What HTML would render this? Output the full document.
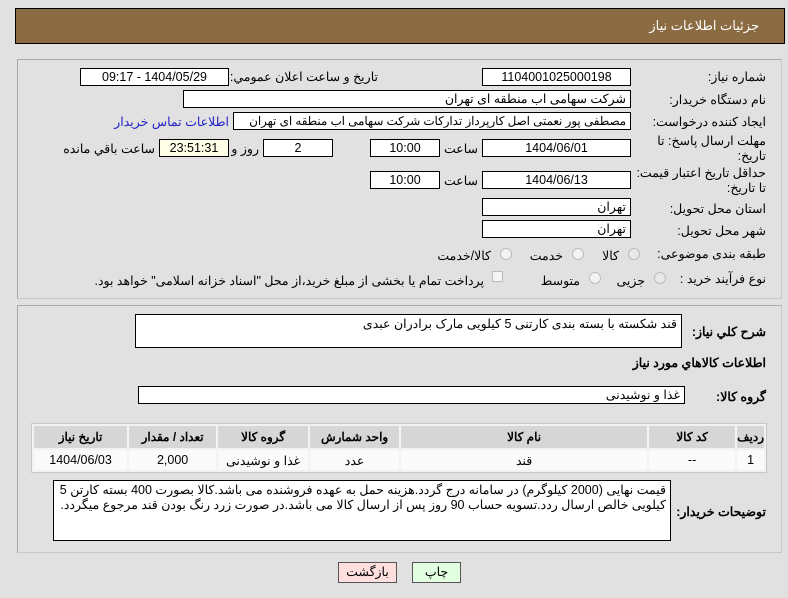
<!DOCTYPE html>
<html><head><meta charset="utf-8"><style>
*{margin:0;padding:0;box-sizing:border-box}
body{width:788px;height:598px;background:#e1e1e1;position:relative;overflow:hidden;font-family:Tahoma,"Liberation Sans","Noto Sans CJK SC",sans-serif;font-size:12.5px;color:#000}
.a{position:absolute;white-space:nowrap}
.l{position:absolute;white-space:nowrap;direction:rtl;text-align:right}
.in{position:absolute;background:#fff;border:1px solid #000;text-align:center;line-height:16px;direction:rtl;white-space:nowrap;overflow:hidden}
.inr{text-align:right;padding-right:4px}
.rad{position:absolute;width:12px;height:12px;border-radius:50%;border:1px solid #bbb;background:#f4f4f4}
.panel{position:absolute;border:1px solid #a8a8a8;border-right-color:#c8c8c8;border-bottom-color:#c8c8c8}
table{position:absolute;border-collapse:separate;border-spacing:2px;background:#f2f2f2;border:1px solid #c8c8c8;direction:rtl}
th{background:#d6d6d6;font-weight:bold;height:22px;font-size:12px}
td{background:#fafafa;text-align:center;height:20px}
.btn{position:absolute;border:1px solid #555;text-align:center;line-height:19px;height:21px}
</style></head><body>
<div class="a" style="left:15px;top:8px;width:770px;height:36px;background:#8b6b42;border:1px solid #000"></div>
<div class="l" style="right:29px;top:18px;color:#fff;font-size:13px">جزئیات اطلاعات نیاز</div>

<div class="panel" style="left:17px;top:59px;width:765px;height:240px"></div>
<div class="l" style="right:22px;top:69px">شماره نیاز:</div>
<div class="in" style="left:482px;top:68px;width:149px;height:18px">1104001025000198</div>
<div class="l" style="right:410px;top:69px">تاریخ و ساعت اعلان عمومي:</div>
<div class="in" style="left:80px;top:68px;width:149px;height:18px">1404/05/29 - 09:17</div>

<div class="l" style="right:22px;top:92px">نام دستگاه خریدار:</div>
<div class="in inr" style="left:183px;top:90px;width:448px;height:18px">شرکت سهامی اب منطقه ای تهران</div>

<div class="l" style="right:22px;top:114px">ایجاد کننده درخواست:</div>
<div class="in inr" style="left:233px;top:112px;width:398px;height:18px;font-size:11.8px">مصطفی پور نعمتی اصل کارپرداز تدارکات شرکت سهامی اب منطقه ای تهران</div>
<div class="l" style="right:559px;top:114px;color:#2222cc">اطلاعات تماس خریدار</div>

<div class="l" style="right:22px;top:134px;line-height:15px">مهلت ارسال پاسخ: تا<br>تاریخ:</div>
<div class="in" style="left:482px;top:139px;width:149px;height:18px">1404/06/01</div>
<div class="l" style="right:310px;top:141px">ساعت</div>
<div class="in" style="left:370px;top:139px;width:70px;height:18px">10:00</div>
<div class="in" style="left:263px;top:139px;width:70px;height:18px">2</div>
<div class="l" style="right:529px;top:141px">روز و</div>
<div class="in" style="left:159px;top:139px;width:70px;height:18px;background:#ffffe8">23:51:31</div>
<div class="l" style="right:633px;top:141px">ساعت باقي مانده</div>

<div class="l" style="right:22px;top:166px;line-height:15px">حداقل تاریخ اعتبار قیمت:<br>تا تاریخ:</div>
<div class="in" style="left:482px;top:171px;width:149px;height:18px">1404/06/13</div>
<div class="l" style="right:310px;top:173px">ساعت</div>
<div class="in" style="left:370px;top:171px;width:70px;height:18px">10:00</div>

<div class="l" style="right:22px;top:201px">استان محل تحویل:</div>
<div class="in inr" style="left:482px;top:198px;width:149px;height:18px">تهران</div>
<div class="l" style="right:22px;top:223px">شهر محل تحویل:</div>
<div class="in inr" style="left:482px;top:220px;width:149px;height:18px">تهران</div>

<div class="l" style="right:22px;top:246px">طبقه بندی موضوعی:</div>
<div class="rad" style="left:628px;top:248px;background:#e8e8e8"></div>
<div class="l" style="right:169px;top:248px">کالا</div>
<div class="rad" style="left:572px;top:248px"></div>
<div class="l" style="right:225px;top:248px">خدمت</div>
<div class="rad" style="left:500px;top:248px"></div>
<div class="l" style="right:297px;top:248px">کالا/خدمت</div>

<div class="l" style="right:22px;top:271px">نوع فرآیند خرید :</div>
<div class="rad" style="left:654px;top:272px;background:#e8e8e8"></div>
<div class="l" style="right:143px;top:273px">جزیی</div>
<div class="rad" style="left:589px;top:272px"></div>
<div class="l" style="right:208px;top:273px">متوسط</div>
<div class="a" style="left:492px;top:271px;width:11px;height:11px;border:1px solid #bbb;background:#f4f4f4"></div>
<div class="l" style="right:304px;top:273px">پرداخت تمام یا بخشی از مبلغ خرید،از محل "اسناد خزانه اسلامی" خواهد بود.</div>

<div class="panel" style="left:17px;top:305px;width:765px;height:248px"></div>
<div class="l" style="right:22px;top:324px;font-weight:bold">شرح کلي نياز:</div>
<div class="in inr" style="left:135px;top:314px;width:547px;height:34px;line-height:18px;text-align:right">قند شکسته با بسته بندی کارتنی  5 کیلویی مارک برادران عبدی</div>
<div class="l" style="right:22px;top:355px;font-weight:bold">اطلاعات کالاهاي مورد نياز</div>
<div class="l" style="right:22px;top:389px;font-weight:bold">گروه کالا:</div>
<div class="in inr" style="left:138px;top:386px;width:547px;height:18px">غذا و نوشیدنی</div>

<table style="left:31px;top:423px;width:736px">
<tr><th style="width:25px">ردیف</th><th style="width:86px">کد کالا</th><th style="width:246px">نام کالا</th><th style="width:89px">واحد شمارش</th><th style="width:90px">گروه کالا</th><th style="width:87px">تعداد / مقدار</th><th>تاریخ نیاز</th></tr>
<tr><td>1</td><td>--</td><td>قند</td><td>عدد</td><td>غذا و نوشیدنی</td><td>2,000</td><td>1404/06/03</td></tr>
</table>

<div class="l" style="right:22px;top:504px;font-weight:bold">توضیحات خریدار:</div>
<div class="in" style="left:53px;top:480px;width:618px;height:61px;text-align:right;white-space:normal;line-height:15px;padding:2px 4px">قیمت نهایی (2000 کیلوگرم) در سامانه درج گردد.هزینه حمل به عهده فروشنده می باشد.کالا بصورت 400 بسته کارتن 5 کیلویی خالص ارسال ردد.تسویه حساب 90 روز پس از ارسال کالا می باشد.در صورت زرد رنگ بودن قند مرجوع میگردد.</div>

<div class="btn" style="left:338px;top:562px;width:59px;background:#ffdede">بازگشت</div>
<div class="btn" style="left:412px;top:562px;width:49px;background:#e2ffe2">چاپ</div>
</body></html>
